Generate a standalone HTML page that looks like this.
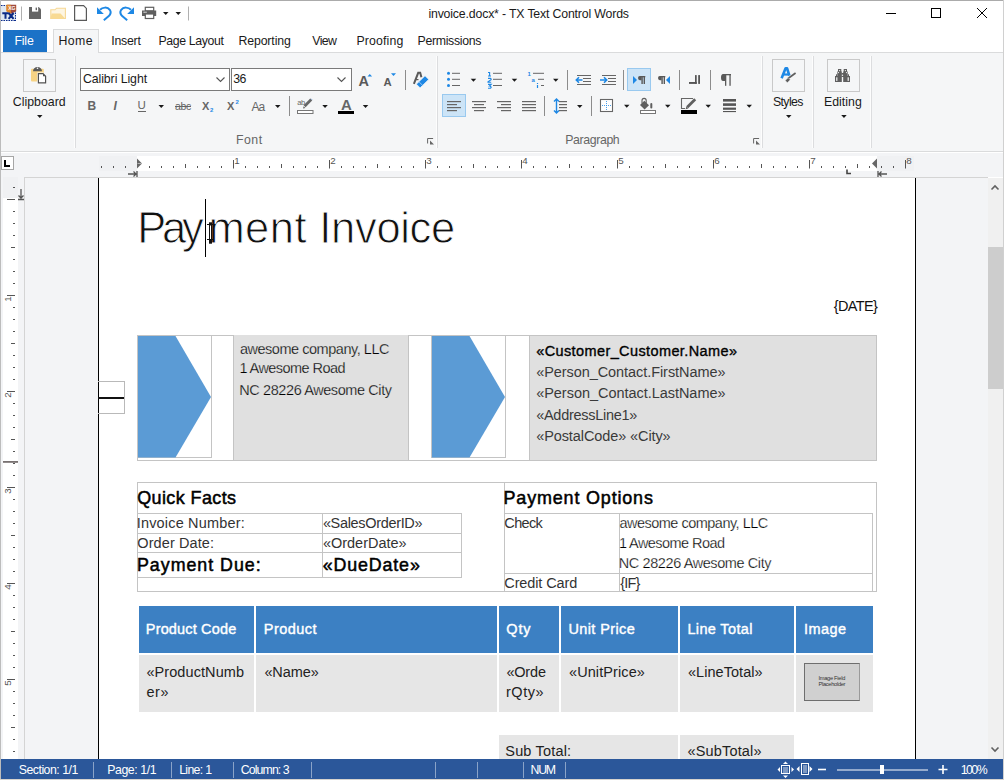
<!DOCTYPE html>
<html><head><meta charset="utf-8">
<style>
*{box-sizing:border-box;margin:0;padding:0}
html,body{width:1004px;height:780px;overflow:hidden;background:#fff;font-family:"Liberation Sans",sans-serif;color:#000}
.a{position:absolute}
.t{position:absolute;white-space:pre;line-height:1}
svg{position:absolute;overflow:visible}
</style></head><body>
<div class="a" style="left:0px;top:0px;width:1004px;height:1px;background:#ababab;"></div>
<div class="a" style="left:0px;top:0px;width:1px;height:780px;background:#bcbcbc;"></div>
<div class="a" style="left:1003px;top:0px;width:1px;height:780px;background:#d0d0d0;"></div>
<div class="t" style="left:428.40px;top:7.97px;font-size:12.32px;color:#1a1a1a;font-weight:normal;letter-spacing:-0.169px;">invoice.docx* - TX Text Control Words</div>
<svg style="left:0px;top:0px" width="1004" height="780" viewBox="0 0 1004 780"><path d="M886 13.5h10" stroke="#000" stroke-width="1"/><rect x="931.5" y="8.5" width="9" height="9" fill="none" stroke="#000" stroke-width="1"/><path d="M977 8l10 10M987 8l-10 10" stroke="#000" stroke-width="1"/></svg>
<svg style="left:0px;top:0px" width="1004" height="780" viewBox="0 0 1004 780"><rect x="1" y="5" width="15" height="16" fill="#dfe7f1"/><path d="M1 5.5h15M1 20.5h15M15.5 5v16" stroke="#0b2b8c" stroke-width="1" stroke-dasharray="1.5 1"/><path d="M7 4.8h9.2v6.4l-4.6 2.6l-4.6-2.6z" fill="#9f4a3d"/><path d="M6.2 4.8h4.6v9l-4.6-2.6z" fill="#e28b2d"/><text x="8.2" y="10.3" font-size="5.2" font-weight="bold" fill="#fff" font-family="Liberation Sans" letter-spacing="-0.2">XG</text><path d="M2.3 13.2h6.4M5.5 13.2v5.6M8.6 13l5 5.8M13.6 13l-5 5.8" stroke="#0a2a85" stroke-width="2"/><path d="M21.5 6.5v14" stroke="#b0b0b0"/><path d="M29 7h9.8l2.2 2.2V19H29z" fill="#656565"/><rect x="32" y="7" width="6.2" height="4.6" fill="#fff"/><rect x="35.6" y="7.6" width="1.4" height="2.6" fill="#656565"/><path d="M50.8 18.5V9.8h4.2l1.6-1.6h8.8v10.3z" fill="#fdf5e2" stroke="#f6d894" stroke-width="1.1"/><path d="M50.3 18.8l1.4-5.4h8.8l4.8 5.4z" fill="#f8da93"/><path d="M74.6 5.6h9l2.8 2.8v12H74.6z" fill="#fff" stroke="#595959" stroke-width="1.2"/><path d="M100 9.8C102.5 7.2 107.5 6.6 109.8 9.8C111.3 12 110.6 14.3 108.8 16.1L103.8 20.2" fill="none" stroke="#1e88e5" stroke-width="2"/><path d="M97 7.2v6.8h6.8z" fill="#1e88e5"/><path d="M131 9.8C128.5 7.2 123.5 6.6 121.2 9.8C119.7 12 120.4 14.3 122.2 16.1L127.2 20.2" fill="none" stroke="#1e88e5" stroke-width="2"/><path d="M134 7.2v6.8h-6.8z" fill="#1e88e5"/><rect x="145.3" y="7.3" width="8.4" height="3.6" fill="#fff" stroke="#5f5f5f" stroke-width="1.2"/><rect x="142" y="10.5" width="14.2" height="5.5" fill="#5f5f5f"/><rect x="145.3" y="14" width="8.4" height="4.5" fill="#fff" stroke="#5f5f5f" stroke-width="1.2"/><rect x="143.5" y="11.7" width="1.3" height="1" fill="#fff"/><rect x="145.3" y="11.7" width="1.3" height="1" fill="#fff"/><path d="M163 12h5.5l-2.75 3z" fill="#1a1a1a"/><path d="M175.5 12h5.5l-2.75 3z" fill="#1a1a1a"/><path d="M188.5 6.5v14" stroke="#b0b0b0"/></svg>
<div class="a" style="left:3px;top:30px;width:44px;height:22px;background:#1b72c7;"></div>
<div class="t" style="left:14.40px;top:34.97px;font-size:12.32px;color:#fff;font-weight:normal;letter-spacing:-0.167px;">File</div>
<div class="a" style="left:53px;top:29px;width:46px;height:24px;background:#f5f6f7;border:1px solid #dadbdc;border-bottom:none"></div>
<div class="t" style="left:58.50px;top:34.97px;font-size:12.32px;color:#1a1a1a;font-weight:normal;letter-spacing:0.433px;">Home</div>
<div class="t" style="left:111.30px;top:34.97px;font-size:12.32px;color:#1a1a1a;font-weight:normal;letter-spacing:-0.240px;">Insert</div>
<div class="t" style="left:158.40px;top:34.97px;font-size:12.32px;color:#1a1a1a;font-weight:normal;letter-spacing:-0.360px;">Page Layout</div>
<div class="t" style="left:238.40px;top:34.97px;font-size:12.32px;color:#1a1a1a;font-weight:normal;letter-spacing:-0.113px;">Reporting</div>
<div class="t" style="left:312.30px;top:34.97px;font-size:12.32px;color:#1a1a1a;font-weight:normal;letter-spacing:-0.633px;">View</div>
<div class="t" style="left:356.40px;top:34.97px;font-size:12.32px;color:#1a1a1a;font-weight:normal;letter-spacing:0.157px;">Proofing</div>
<div class="t" style="left:417.50px;top:34.97px;font-size:12.32px;color:#1a1a1a;font-weight:normal;letter-spacing:-0.320px;">Permissions</div>
<div class="a" style="left:1px;top:52px;width:1002px;height:100px;background:#f5f6f7;border-top:1px solid #dadbdc;border-bottom:1px solid #dadbdc"></div>
<div class="a" style="left:54px;top:52px;width:44px;height:1px;background:#f5f6f7;"></div>
<div class="a" style="left:74px;top:56px;width:1px;height:92px;background:#fdfdfd;"></div>
<div class="a" style="left:75px;top:56px;width:1px;height:92px;background:#dcdddf;"></div>
<div class="a" style="left:436px;top:56px;width:1px;height:92px;background:#fdfdfd;"></div>
<div class="a" style="left:437px;top:56px;width:1px;height:92px;background:#dcdddf;"></div>
<div class="a" style="left:761px;top:56px;width:1px;height:92px;background:#fdfdfd;"></div>
<div class="a" style="left:762px;top:56px;width:1px;height:92px;background:#dcdddf;"></div>
<div class="a" style="left:812px;top:56px;width:1px;height:92px;background:#fdfdfd;"></div>
<div class="a" style="left:813px;top:56px;width:1px;height:92px;background:#dcdddf;"></div>
<div class="a" style="left:870px;top:56px;width:1px;height:92px;background:#fdfdfd;"></div>
<div class="a" style="left:871px;top:56px;width:1px;height:92px;background:#dcdddf;"></div>
<div class="a" style="left:23px;top:59px;width:33px;height:33px;background:transparent;border:1px solid #c9c9c9"></div>
<svg style="left:0px;top:0px" width="1004" height="780" viewBox="0 0 1004 780"><rect x="31" y="68.8" width="12.8" height="12.8" rx="1" fill="#f7d384"/><path d="M33 71.3c0-2.4 2-4.2 4.5-4.2s4.5 1.8 4.5 4.2z" fill="#5a5a5a"/><circle cx="37.5" cy="68.3" r="0.8" fill="#fff"/><path d="M37.3 72.6h5.8l3.2 3.2v8h-9z" fill="#fff"/><path d="M38.4 73.6h4.6l2.6 2.6v6.7h-7.2z" fill="#fff" stroke="#505050" stroke-width="1.2"/><path d="M43 73.6v2.6h2.6" fill="#505050"/></svg>
<div class="t" style="left:12.80px;top:95.67px;font-size:12.32px;color:#1a1a1a;font-weight:normal;letter-spacing:0.013px;">Clipboard</div>
<svg style="left:0px;top:0px" width="1004" height="780" viewBox="0 0 1004 780"><path d="M37 115h5.5l-2.75 3z" fill="#1a1a1a"/></svg>
<div class="a" style="left:80px;top:68px;width:150px;height:23px;background:#fff;border:1px solid #7a7a7a"></div>
<div class="t" style="left:82.90px;top:72.97px;font-size:12.32px;color:#1a1a1a;font-weight:normal;letter-spacing:-0.067px;">Calibri Light</div>
<div class="a" style="left:231px;top:68px;width:121px;height:23px;background:#fff;border:1px solid #7a7a7a"></div>
<div class="t" style="left:233.30px;top:72.97px;font-size:12.32px;color:#1a1a1a;font-weight:normal;letter-spacing:-0.700px;">36</div>
<svg style="left:0px;top:0px" width="1004" height="780" viewBox="0 0 1004 780"><path d="M216.5 77.5l4 4l4-4" fill="none" stroke="#555" stroke-width="1.1"/><path d="M337.5 77.5l4 4l4-4" fill="none" stroke="#555" stroke-width="1.1"/></svg>
<div class="t" style="left:358.50px;top:73.93px;font-size:14.49px;color:#595959;font-weight:bold;letter-spacing:0.000px;transform:scaleX(1.0)">A</div>
<svg style="left:0px;top:0px" width="1004" height="780" viewBox="0 0 1004 780"><path d="M367.5 76.5l2.3-2.6l2.3 2.6z" fill="#1e88e5"/><path d="M391 73.2h5l-2.5 2.8z" fill="#1e88e5"/></svg>
<div class="t" style="left:383.60px;top:76.63px;font-size:11.3px;color:#595959;font-weight:bold;letter-spacing:0.000px;">A</div>
<div class="a" style="left:405px;top:70px;width:1px;height:20px;background:#8c8c8c;"></div>
<svg style="left:0px;top:0px" width="1004" height="780" viewBox="0 0 1004 780"><path d="M413.9 83.8L418.2 72.8h2L421.4 77.2" fill="none" stroke="#5a5a5a" stroke-width="2"/><path d="M415.3 79.6h3.2" stroke="#5a5a5a" stroke-width="1.2"/><path d="M416.3 84.2L425 75.7L428.8 79.4L420.1 87.9z" fill="#1e88e5" stroke="#f5f6f7" stroke-width="0.8"/><path d="M418.9 81.7L422.6 85.4" stroke="#9fcaf3" stroke-width="0.9"/></svg>
<div class="t" style="left:87.5px;top:99.84px;font-size:12px;color:#666;font-weight:bold;font-family:'Liberation Sans',sans-serif;">B</div>
<div class="t" style="left:113.5px;top:99.84px;font-size:12px;color:#666;font-weight:bold;font-family:'Liberation Sans',sans-serif;font-style:italic">I</div>
<div class="t" style="left:137.5px;top:99.77px;font-size:11.5px;color:#666;font-weight:normal;font-family:'Liberation Sans',sans-serif;">U</div>
<div class="a" style="left:137.5px;top:110.5px;width:8px;height:1px;background:#666;"></div>
<svg style="left:0px;top:0px" width="1004" height="780" viewBox="0 0 1004 780"><path d="M158.5 105h5.5l-2.75 3z" fill="#1a1a1a"/></svg>
<div class="t" style="left:175px;top:101.11px;font-size:10.5px;color:#666;font-weight:normal;font-family:'Liberation Sans',sans-serif;letter-spacing:-0.3px">abc</div>
<div class="a" style="left:175px;top:106px;width:16px;height:1px;background:#666;"></div>
<div class="t" style="left:202px;top:100.69px;font-size:11px;color:#666;font-weight:bold;font-family:'Liberation Sans',sans-serif;">X</div>
<div class="t" style="left:210px;top:106.92px;font-size:6px;color:#1e88e5;font-weight:bold;font-family:'Liberation Sans',sans-serif;">2</div>
<div class="t" style="left:227px;top:100.69px;font-size:11px;color:#666;font-weight:bold;font-family:'Liberation Sans',sans-serif;">X</div>
<div class="t" style="left:235.5px;top:99.42px;font-size:6px;color:#1e88e5;font-weight:bold;font-family:'Liberation Sans',sans-serif;">2</div>
<div class="t" style="left:251.5px;top:100.84px;font-size:12px;color:#666;font-weight:normal;font-family:'Liberation Sans',sans-serif;letter-spacing:-1px">Aa</div>
<svg style="left:0px;top:0px" width="1004" height="780" viewBox="0 0 1004 780"><path d="M275 105h5.5l-2.75 3z" fill="#1a1a1a"/></svg>
<div class="a" style="left:289px;top:96px;width:1px;height:20px;background:#8c8c8c;"></div>
<svg style="left:0px;top:0px" width="1004" height="780" viewBox="0 0 1004 780"><text x="297.3" y="104.8" font-size="7.6" fill="#666" font-family="Liberation Sans" letter-spacing="-0.4">ab</text><path d="M304.6 106.2L311.2 99.6" stroke="#666" stroke-width="2.8"/><path d="M303 108.6l0.6-2.4l1.8 1.8z" fill="#666"/><path d="M310.9 98.6l1.5 1.5" stroke="#5a8ed0" stroke-width="0.6"/><rect x="297.5" y="110.5" width="15.5" height="3" fill="#fff" stroke="#777" stroke-width="1"/></svg>
<svg style="left:0px;top:0px" width="1004" height="780" viewBox="0 0 1004 780"><path d="M322.3 105h5.5l-2.75 3z" fill="#1a1a1a"/></svg>
<div class="t" style="left:341.10px;top:98.06px;font-size:14.93px;color:#666;font-weight:bold;letter-spacing:0.000px;">A</div>
<div class="a" style="left:338px;top:110.5px;width:16px;height:3.5px;background:#000;"></div>
<svg style="left:0px;top:0px" width="1004" height="780" viewBox="0 0 1004 780"><path d="M362.8 105h5.5l-2.75 3z" fill="#1a1a1a"/></svg>
<div class="t" style="left:236.00px;top:133.57px;font-size:12.32px;color:#666;font-weight:normal;letter-spacing:0.500px;">Font</div>
<svg style="left:0px;top:0px" width="1004" height="780" viewBox="0 0 1004 780"><path d="M427.6 143.5v-5h5.5" fill="none" stroke="#666" stroke-width="1"/><path d="M430 140.5l4 4h-4z" fill="#666"/><path d="M753.6 143.5v-5h5.5" fill="none" stroke="#666" stroke-width="1"/><path d="M756 140.5l4 4h-4z" fill="#666"/></svg>
<svg style="left:0px;top:0px" width="1004" height="780" viewBox="0 0 1004 780"><circle cx="448.5" cy="73.3" r="1.5" fill="#1e88e5"/><path d="M452 73.3h8" stroke="#666" stroke-width="1"/><circle cx="448.5" cy="79.3" r="1.5" fill="#1e88e5"/><path d="M452 79.3h8" stroke="#666" stroke-width="1"/><circle cx="448.5" cy="85.5" r="1.5" fill="#1e88e5"/><path d="M452 85.5h8" stroke="#666" stroke-width="1"/><path d="M470.7 78.8h5.5l-2.75 3z" fill="#1a1a1a"/><path d="M493 73.3h9" stroke="#666" stroke-width="1"/><path d="M493 79.3h9" stroke="#666" stroke-width="1"/><path d="M493 85.5h9" stroke="#666" stroke-width="1"/><path d="M488 72.5h1.6v3.8M488 76h3M488 78.4h2.5l0.6 0.6v0.7l-3.1 2.2v0.4h3.2M488 84.4h3.1l-1.6 1.6h0.6l1 1v0.6l-0.6 0.6h-2.5" fill="none" stroke="#1e88e5" stroke-width="1.15"/><path d="M511.7 78.8h5.5l-2.75 3z" fill="#1a1a1a"/><text x="527.5" y="75.9" font-size="6" font-weight="bold" fill="#1e88e5" font-family="Liberation Sans">1</text><path d="M533 73.3h11" stroke="#666"/><text x="531.5" y="81.9" font-size="6" font-weight="bold" fill="#1e88e5" font-family="Liberation Sans">a</text><path d="M538 79.3h6" stroke="#666"/><path d="M537.5 83v1M537.5 85v3" stroke="#1e88e5" stroke-width="1.2"/><path d="M541 85.5h3" stroke="#666"/><path d="M553 78.8h5.5l-2.75 3z" fill="#1a1a1a"/><path d="M567.5 70v20" stroke="#8c8c8c"/><path d="M577 75.5h14M583 78.5h8M583 81.5h8M577 84.5h14" stroke="#666" stroke-width="1"/><path d="M582.5 80h-6M579 77.3l-2.7 2.7l2.7 2.7" fill="none" stroke="#1e88e5" stroke-width="1.6"/><path d="M602 75.5h14M608 78.5h8M608 81.5h8M602 84.5h14" stroke="#666" stroke-width="1"/><path d="M600 80h6.5M604 77.3l2.7 2.7l-2.7 2.7" fill="none" stroke="#1e88e5" stroke-width="1.6"/><path d="M623.5 70v20" stroke="#8c8c8c"/><rect x="627.5" y="68.5" width="23" height="22" fill="#cce4f7" stroke="#99c9ef"/><path d="M633 76v8l4-4z" fill="#1e88e5"/><path d="M641.6 76h-1.80a1.80 2.10 0 0 0 0 4.20h1.80z" fill="#595959"/><rect x="639.80" y="76" width="5.50" height="1.3" fill="#595959"/><rect x="641.40" y="76" width="1.4" height="8" fill="#595959"/><rect x="643.60" y="76" width="1.4" height="8" fill="#595959"/><path d="M661.6 76h-1.80a1.80 2.10 0 0 0 0 4.20h1.80z" fill="#595959"/><rect x="659.80" y="76" width="5.50" height="1.3" fill="#595959"/><rect x="661.40" y="76" width="1.4" height="8" fill="#595959"/><rect x="663.60" y="76" width="1.4" height="8" fill="#595959"/><path d="M670 76v8l-4-4z" fill="#1e88e5"/><path d="M679.5 70v20" stroke="#8c8c8c"/><rect x="689" y="82" width="7.7" height="1.9" fill="#555"/><rect x="695" y="75.1" width="1.7" height="8.8" fill="#555"/><rect x="698.2" y="75.1" width="1.8" height="8.8" fill="#555"/><path d="M710.5 70v20" stroke="#8c8c8c"/><path d="M725.2 74h-2.10a2.10 3.50 0 0 0 0 7.00h2.10z" fill="#595959"/><rect x="723.10" y="74" width="7.90" height="1.3" fill="#595959"/><rect x="725.00" y="74" width="1.3" height="11.8" fill="#595959"/><rect x="729.40" y="74" width="1.3" height="11.8" fill="#595959"/><rect x="442.5" y="94.5" width="23" height="22" fill="#cce4f7" stroke="#99c9ef"/><path d="M447 101.6h14" stroke="#666" stroke-width="1.2"/><path d="M447 104.6h10" stroke="#666" stroke-width="1.2"/><path d="M447 107.6h14" stroke="#666" stroke-width="1.2"/><path d="M447 110.6h10" stroke="#666" stroke-width="1.2"/><path d="M472 101.6h14" stroke="#666" stroke-width="1.2"/><path d="M474 104.6h10" stroke="#666" stroke-width="1.2"/><path d="M472 107.6h14" stroke="#666" stroke-width="1.2"/><path d="M474 110.6h10" stroke="#666" stroke-width="1.2"/><path d="M497 101.6h14" stroke="#666" stroke-width="1.2"/><path d="M501 104.6h10" stroke="#666" stroke-width="1.2"/><path d="M497 107.6h14" stroke="#666" stroke-width="1.2"/><path d="M501 110.6h10" stroke="#666" stroke-width="1.2"/><path d="M522 101.6h14" stroke="#666" stroke-width="1.2"/><path d="M522 104.6h14" stroke="#666" stroke-width="1.2"/><path d="M522 107.6h14" stroke="#666" stroke-width="1.2"/><path d="M522 110.6h14" stroke="#666" stroke-width="1.2"/><path d="M544.5 96v20" stroke="#8c8c8c"/><path d="M556.5 99.5v13M554 101.5l2.5-2.5l2.5 2.5M554 110.5l2.5 2.5l2.5-2.5" fill="none" stroke="#1e88e5" stroke-width="1.4"/><path d="M559 101.6h8" stroke="#666" stroke-width="1.2"/><path d="M559 104.6h8" stroke="#666" stroke-width="1.2"/><path d="M559 107.6h8" stroke="#666" stroke-width="1.2"/><path d="M559 110.6h8" stroke="#666" stroke-width="1.2"/><path d="M577 105h5.5l-2.75 3z" fill="#1a1a1a"/><path d="M591.5 96v20" stroke="#8c8c8c"/><rect x="600.5" y="99.5" width="12" height="12" fill="#fff" stroke="#666" stroke-width="1.1"/><path d="M606.5 101v9M602 105.5h9" stroke="#1e88e5" stroke-width="0.8" stroke-dasharray="1 1"/><path d="M624 104.8h5.5l-2.75 3z" fill="#1a1a1a"/><path d="M642 103.5v-3a2.1 2.1 0 0 1 4.2 0v3.5" fill="none" stroke="#5f5f5f" stroke-width="1.1"/><path d="M640 105L644.3 100.7L649 105.2L644.6 109.4z" fill="#5f5f5f"/><rect x="650.3" y="103" width="2" height="5.5" rx="1" fill="#5f5f5f"/><rect x="640.5" y="110.5" width="15" height="3" fill="#fff" stroke="#777"/><path d="M665 104.8h5.5l-2.75 3z" fill="#1a1a1a"/><path d="M693 98.5H681.5V108.5H685" fill="none" stroke="#666" stroke-width="1.1"/><path d="M687.2 107.3L695.2 99.3" stroke="#5f5f5f" stroke-width="2.8"/><path d="M685.6 109.2l0.8-2.6l1.9 1.9z" fill="#5f5f5f"/><rect x="681" y="110" width="16" height="4" fill="#000"/><path d="M705.5 104.8h5.5l-2.75 3z" fill="#1a1a1a"/><rect x="723" y="99" width="13" height="2.6" fill="#555"/><rect x="723" y="103.3" width="13" height="2.6" fill="#555"/><rect x="723" y="107.6" width="13" height="2.2" fill="#555"/><rect x="723" y="111" width="13" height="1.1" fill="#555"/><path d="M746.5 104.8h5.5l-2.75 3z" fill="#1a1a1a"/></svg>
<div class="t" style="left:565.30px;top:133.57px;font-size:12.32px;color:#666;font-weight:normal;letter-spacing:-0.387px;">Paragraph</div>
<div class="a" style="left:772px;top:59px;width:33px;height:33px;background:transparent;border:1px solid #c9c9c9"></div>
<div class="a" style="left:827px;top:59px;width:33px;height:33px;background:transparent;border:1px solid #c9c9c9"></div>
<svg style="left:0px;top:0px" width="1004" height="780" viewBox="0 0 1004 780"><path d="M781.6 78.2L785.6 68.3h1.5L789.3 75.5" fill="none" stroke="#1e88e5" stroke-width="2.6" stroke-linejoin="round"/><path d="M783.2 74.5h6.3" stroke="#1e88e5" stroke-width="2.2"/><path d="M788 78.5L795.6 73" stroke="#5f5f5f" stroke-width="1.7"/><path d="M785.2 80.5L788.2 77.6L790.3 79.8L787.3 82.8z" fill="#5f5f5f" stroke="#f5f6f7" stroke-width="0.5"/><g fill="#5f5f5f"><rect x="835" y="76" width="6" height="6"/><rect x="837.3" y="71.5" width="4.5" height="10.5"/><rect x="838" y="69" width="3.3" height="3"/><rect x="841.5" y="73" width="3" height="4"/><rect x="843.7" y="69" width="3.3" height="3"/><rect x="843.2" y="71.5" width="4.5" height="10.5"/><rect x="844" y="76" width="6" height="6"/><rect x="836" y="74.3" width="1" height="2"/><rect x="848" y="74.3" width="1" height="2"/></g><g fill="#f5f6f7"><rect x="836.2" y="77.3" width="1.2" height="3.6"/><rect x="847.6" y="77.3" width="1.2" height="3.6"/><circle cx="839.6" cy="70.6" r="0.6"/><circle cx="845.4" cy="70.6" r="0.6"/><circle cx="838.5" cy="72.6" r="0.6"/><circle cx="846.5" cy="72.6" r="0.6"/><circle cx="842.5" cy="75.3" r="0.7"/></g></svg>
<div class="t" style="left:772.90px;top:95.97px;font-size:12.32px;color:#1a1a1a;font-weight:normal;letter-spacing:-0.600px;">Styles</div>
<div class="t" style="left:824.00px;top:95.97px;font-size:12.32px;color:#1a1a1a;font-weight:normal;letter-spacing:0.017px;">Editing</div>
<svg style="left:0px;top:0px" width="1004" height="780" viewBox="0 0 1004 780"><path d="M786 115h5.5l-2.75 3z" fill="#1a1a1a"/><path d="M841.2 115h5.5l-2.75 3z" fill="#1a1a1a"/></svg>
<div class="a" style="left:1px;top:152px;width:1002px;height:25px;background:#f3f4f6;"></div>
<div class="a" style="left:1px;top:152px;width:1002px;height:1px;background:#ffffff;"></div>
<div class="a" style="left:99px;top:156px;width:815px;height:15px;background:#fff;"></div>
<div class="a" style="left:99px;top:156px;width:38px;height:15px;background:#f0f1f3;"></div>
<div class="a" style="left:877px;top:156px;width:37px;height:15px;background:#f0f1f3;"></div>
<div class="a" style="left:1px;top:156px;width:13px;height:14px;background:#fff;border:1px solid #a6a6a6"></div>
<svg style="left:0px;top:0px" width="1004" height="780" viewBox="0 0 1004 780"><path d="M5 160v6h5" fill="none" stroke="#000" stroke-width="2"/></svg>
<svg style="left:0px;top:0px" width="1004" height="780" viewBox="0 0 1004 780"><rect x="101" y="166" width="1" height="2" fill="#555"/><rect x="113" y="166" width="1" height="2" fill="#555"/><rect x="125" y="166" width="1" height="2" fill="#555"/><rect x="149" y="166" width="1" height="2" fill="#555"/><rect x="161" y="166" width="1" height="2" fill="#555"/><rect x="173" y="166" width="1" height="2" fill="#555"/><rect x="185" y="164" width="1" height="4" fill="#555"/><rect x="197" y="166" width="1" height="2" fill="#555"/><rect x="209" y="166" width="1" height="2" fill="#555"/><rect x="221" y="166" width="1" height="2" fill="#555"/><rect x="233" y="160" width="1" height="8.5" fill="#555"/><text x="234.2" y="163.9" font-size="9.8" fill="#555" font-family="Liberation Sans">1</text><rect x="245" y="166" width="1" height="2" fill="#555"/><rect x="257" y="166" width="1" height="2" fill="#555"/><rect x="269" y="166" width="1" height="2" fill="#555"/><rect x="281" y="164" width="1" height="4" fill="#555"/><rect x="293" y="166" width="1" height="2" fill="#555"/><rect x="305" y="166" width="1" height="2" fill="#555"/><rect x="317" y="166" width="1" height="2" fill="#555"/><rect x="329" y="160" width="1" height="8.5" fill="#555"/><text x="330.2" y="163.9" font-size="9.8" fill="#555" font-family="Liberation Sans">2</text><rect x="341" y="166" width="1" height="2" fill="#555"/><rect x="353" y="166" width="1" height="2" fill="#555"/><rect x="365" y="166" width="1" height="2" fill="#555"/><rect x="377" y="164" width="1" height="4" fill="#555"/><rect x="389" y="166" width="1" height="2" fill="#555"/><rect x="401" y="166" width="1" height="2" fill="#555"/><rect x="413" y="166" width="1" height="2" fill="#555"/><rect x="425" y="160" width="1" height="8.5" fill="#555"/><text x="426.2" y="163.9" font-size="9.8" fill="#555" font-family="Liberation Sans">3</text><rect x="437" y="166" width="1" height="2" fill="#555"/><rect x="449" y="166" width="1" height="2" fill="#555"/><rect x="461" y="166" width="1" height="2" fill="#555"/><rect x="473" y="164" width="1" height="4" fill="#555"/><rect x="485" y="166" width="1" height="2" fill="#555"/><rect x="497" y="166" width="1" height="2" fill="#555"/><rect x="509" y="166" width="1" height="2" fill="#555"/><rect x="521" y="160" width="1" height="8.5" fill="#555"/><text x="522.2" y="163.9" font-size="9.8" fill="#555" font-family="Liberation Sans">4</text><rect x="533" y="166" width="1" height="2" fill="#555"/><rect x="545" y="166" width="1" height="2" fill="#555"/><rect x="557" y="166" width="1" height="2" fill="#555"/><rect x="569" y="164" width="1" height="4" fill="#555"/><rect x="581" y="166" width="1" height="2" fill="#555"/><rect x="593" y="166" width="1" height="2" fill="#555"/><rect x="605" y="166" width="1" height="2" fill="#555"/><rect x="617" y="160" width="1" height="8.5" fill="#555"/><text x="618.2" y="163.9" font-size="9.8" fill="#555" font-family="Liberation Sans">5</text><rect x="629" y="166" width="1" height="2" fill="#555"/><rect x="641" y="166" width="1" height="2" fill="#555"/><rect x="653" y="166" width="1" height="2" fill="#555"/><rect x="665" y="164" width="1" height="4" fill="#555"/><rect x="677" y="166" width="1" height="2" fill="#555"/><rect x="689" y="166" width="1" height="2" fill="#555"/><rect x="701" y="166" width="1" height="2" fill="#555"/><rect x="713" y="160" width="1" height="8.5" fill="#555"/><text x="714.2" y="163.9" font-size="9.8" fill="#555" font-family="Liberation Sans">6</text><rect x="725" y="166" width="1" height="2" fill="#555"/><rect x="737" y="166" width="1" height="2" fill="#555"/><rect x="749" y="166" width="1" height="2" fill="#555"/><rect x="761" y="164" width="1" height="4" fill="#555"/><rect x="773" y="166" width="1" height="2" fill="#555"/><rect x="785" y="166" width="1" height="2" fill="#555"/><rect x="797" y="166" width="1" height="2" fill="#555"/><rect x="809" y="160" width="1" height="8.5" fill="#555"/><text x="810.2" y="163.9" font-size="9.8" fill="#555" font-family="Liberation Sans">7</text><rect x="821" y="166" width="1" height="2" fill="#555"/><rect x="833" y="166" width="1" height="2" fill="#555"/><rect x="845" y="166" width="1" height="2" fill="#555"/><rect x="857" y="164" width="1" height="4" fill="#555"/><rect x="869" y="166" width="1" height="2" fill="#555"/><rect x="881" y="166" width="1" height="2" fill="#555"/><rect x="893" y="166" width="1" height="2" fill="#555"/><rect x="905" y="160" width="1" height="8.5" fill="#555"/><text x="906.2" y="163.9" font-size="9.8" fill="#555" font-family="Liberation Sans">8</text><path d="M137 158.5v10l5-5z" fill="#666"/><path d="M137.5 163.5h4" stroke="#fff" stroke-width="0.5"/><path d="M128 174h8M133.5 171.5l2.5 2.5l-2.5 2.5M137 171v6" fill="none" stroke="#555" stroke-width="1.3"/><path d="M877 158.5v10l-5-5z" fill="#666"/><path d="M887 174h-8M881.5 171.5l-2.5 2.5l2.5 2.5M878 171v6" fill="none" stroke="#555" stroke-width="1.3"/><path d="M847 169.5v4h4" fill="none" stroke="#444" stroke-width="1.6"/></svg>
<div class="a" style="left:1px;top:177px;width:987px;height:582px;background:#f3f4f6;"></div>
<div class="a" style="left:24px;top:177px;width:964px;height:1px;background:#d4d4d4;"></div>
<div class="a" style="left:24px;top:177px;width:1px;height:582px;background:#d4d4d4;"></div>
<div class="a" style="left:3px;top:177px;width:15px;height:582px;background:#fff;"></div>
<div class="a" style="left:3px;top:177px;width:15px;height:21px;background:#f0f1f3;"></div>
<svg style="left:0px;top:0px" width="1004" height="780" viewBox="0 0 1004 780"><rect x="13" y="187" width="2" height="1" fill="#555"/><rect x="7" y="199" width="8" height="1" fill="#555"/><rect x="13" y="211" width="2" height="1" fill="#555"/><rect x="13" y="223" width="2" height="1" fill="#555"/><rect x="13" y="235" width="2" height="1" fill="#555"/><rect x="11" y="247" width="4" height="1" fill="#555"/><rect x="13" y="259" width="2" height="1" fill="#555"/><rect x="13" y="271" width="2" height="1" fill="#555"/><rect x="13" y="283" width="2" height="1" fill="#555"/><rect x="7" y="295" width="8" height="1" fill="#555"/><text transform="translate(11 301.8) rotate(-90)" font-size="9.8" fill="#555" font-family="Liberation Sans">1</text><rect x="13" y="307" width="2" height="1" fill="#555"/><rect x="13" y="319" width="2" height="1" fill="#555"/><rect x="13" y="331" width="2" height="1" fill="#555"/><rect x="11" y="343" width="4" height="1" fill="#555"/><rect x="13" y="355" width="2" height="1" fill="#555"/><rect x="13" y="367" width="2" height="1" fill="#555"/><rect x="13" y="379" width="2" height="1" fill="#555"/><rect x="7" y="391" width="8" height="1" fill="#555"/><text transform="translate(11 397.8) rotate(-90)" font-size="9.8" fill="#555" font-family="Liberation Sans">2</text><rect x="13" y="403" width="2" height="1" fill="#555"/><rect x="13" y="415" width="2" height="1" fill="#555"/><rect x="13" y="427" width="2" height="1" fill="#555"/><rect x="11" y="439" width="4" height="1" fill="#555"/><rect x="13" y="451" width="2" height="1" fill="#555"/><rect x="13" y="463" width="2" height="1" fill="#555"/><rect x="13" y="475" width="2" height="1" fill="#555"/><rect x="7" y="487" width="8" height="1" fill="#555"/><text transform="translate(11 493.8) rotate(-90)" font-size="9.8" fill="#555" font-family="Liberation Sans">3</text><rect x="13" y="499" width="2" height="1" fill="#555"/><rect x="13" y="511" width="2" height="1" fill="#555"/><rect x="13" y="523" width="2" height="1" fill="#555"/><rect x="11" y="535" width="4" height="1" fill="#555"/><rect x="13" y="547" width="2" height="1" fill="#555"/><rect x="13" y="559" width="2" height="1" fill="#555"/><rect x="13" y="571" width="2" height="1" fill="#555"/><rect x="7" y="583" width="8" height="1" fill="#555"/><text transform="translate(11 589.8) rotate(-90)" font-size="9.8" fill="#555" font-family="Liberation Sans">4</text><rect x="13" y="595" width="2" height="1" fill="#555"/><rect x="13" y="607" width="2" height="1" fill="#555"/><rect x="13" y="619" width="2" height="1" fill="#555"/><rect x="11" y="631" width="4" height="1" fill="#555"/><rect x="13" y="643" width="2" height="1" fill="#555"/><rect x="13" y="655" width="2" height="1" fill="#555"/><rect x="13" y="667" width="2" height="1" fill="#555"/><rect x="7" y="679" width="8" height="1" fill="#555"/><text transform="translate(11 685.8) rotate(-90)" font-size="9.8" fill="#555" font-family="Liberation Sans">5</text><rect x="13" y="691" width="2" height="1" fill="#555"/><rect x="13" y="703" width="2" height="1" fill="#555"/><rect x="13" y="715" width="2" height="1" fill="#555"/><rect x="11" y="727" width="4" height="1" fill="#555"/><rect x="13" y="739" width="2" height="1" fill="#555"/><rect x="13" y="751" width="2" height="1" fill="#555"/><path d="M21 189v9M18.5 195.5l2.5 2.5l2.5-2.5M18 199.5h6" fill="none" stroke="#555" stroke-width="1.3"/><rect x="3" y="461" width="15" height="1.8" fill="#787171"/></svg>
<div class="a" style="left:98px;top:178px;width:818px;height:581px;background:#fff;border-left:1px solid #000;border-right:1px solid #000"></div>
<div class="a" style="left:988px;top:178px;width:15px;height:581px;background:#f0f0f0;"></div>
<div class="a" style="left:988px;top:247px;width:15px;height:142px;background:#cdcdcd;"></div>
<svg style="left:0px;top:0px" width="1004" height="780" viewBox="0 0 1004 780"><path d="M991.5 189.5l3.5-3.5l3.5 3.5" fill="none" stroke="#606060" stroke-width="1.6"/><path d="M991.5 747.5l3.5 3.5l3.5-3.5" fill="none" stroke="#606060" stroke-width="1.6"/></svg>
<div class="t" style="left:137.30px;top:207.39px;font-size:43.48px;color:#111;font-weight:normal;letter-spacing:-4.250px;-webkit-text-stroke:0.9px #fff">Pay</div>
<div class="t" style="left:208.40px;top:207.39px;font-size:43.48px;color:#111;font-weight:normal;letter-spacing:0.500px;-webkit-text-stroke:0.9px #fff">ment</div>
<div class="t" style="left:319.30px;top:207.39px;font-size:43.48px;color:#111;font-weight:normal;letter-spacing:-0.300px;-webkit-text-stroke:0.9px #fff">Invoice</div>
<div class="a" style="left:205px;top:199px;width:1px;height:58px;background:#000;"></div>
<svg style="left:0px;top:0px" width="1004" height="780" viewBox="0 0 1004 780"><rect x="209" y="222.3" width="3" height="21.4" fill="#111"/><rect x="210" y="225.5" width="1" height="13.5" fill="#fff"/><rect x="207" y="224" width="7" height="1" fill="#111"/><rect x="207" y="239" width="7" height="1" fill="#111"/></svg>
<div class="t" style="left:833.70px;top:298.83px;font-size:14.49px;color:#111;font-weight:normal;letter-spacing:-0.600px;">{DATE}</div>
<div class="a" style="left:98px;top:381px;width:27px;height:33px;background:transparent;border:1px solid #b9b9b9;border-left:none"></div>
<div class="a" style="left:98px;top:397px;width:26px;height:2px;background:#111;"></div>
<div class="a" style="left:137px;top:335px;width:740px;height:126px;background:#fff;border:1px solid #c4c4c4"></div>
<div class="a" style="left:233px;top:335px;width:176px;height:125px;background:#e0e0e0;border-left:1px solid #c4c4c4;border-right:1px solid #c4c4c4"></div>
<div class="a" style="left:529px;top:335px;width:348px;height:125px;background:#e0e0e0;border-left:1px solid #c4c4c4;border-right:1px solid #c4c4c4;border-top:1px solid #c4c4c4"></div>
<div class="a" style="left:137px;top:335px;width:75px;height:123px;background:#fff;border:1px solid #c4c4c4"></div>
<div class="a" style="left:431px;top:335px;width:75px;height:123px;background:#fff;border:1px solid #c4c4c4"></div>
<svg style="left:0px;top:0px" width="1004" height="780" viewBox="0 0 1004 780"><path d="M138 336h37.5l35.5 61l-35.5 60.5H138z" fill="#5b9bd5"/><path d="M432 336h37.5l35.5 61l-35.5 60.5H432z" fill="#5b9bd5"/></svg>
<div class="t" style="left:239.90px;top:341.73px;font-size:14.49px;color:#000;font-weight:normal;letter-spacing:-0.458px;-webkit-text-stroke:0.25px #e0e0e0">awesome company, LLC</div>
<div class="t" style="left:239.40px;top:360.63px;font-size:14.49px;color:#000;font-weight:normal;letter-spacing:-0.554px;-webkit-text-stroke:0.25px #e0e0e0">1 Awesome Road</div>
<div class="t" style="left:239.30px;top:382.53px;font-size:14.49px;color:#000;font-weight:normal;letter-spacing:-0.400px;-webkit-text-stroke:0.25px #e0e0e0">NC 28226 Awesome City</div>
<div class="t" style="left:536.20px;top:343.93px;font-size:14.49px;color:#000;font-weight:normal;letter-spacing:0.400px;-webkit-text-stroke:0.35px #000">&laquo;Customer_Customer.Name&raquo;</div>
<div class="t" style="left:536.20px;top:365.43px;font-size:14.49px;color:#3a3a3a;font-weight:normal;letter-spacing:-0.060px;">&laquo;Person_Contact.FirstName&raquo;</div>
<div class="t" style="left:536.20px;top:386.23px;font-size:14.49px;color:#3a3a3a;font-weight:normal;letter-spacing:-0.029px;">&laquo;Person_Contact.LastName&raquo;</div>
<div class="t" style="left:536.20px;top:407.73px;font-size:14.49px;color:#3a3a3a;font-weight:normal;letter-spacing:-0.269px;">&laquo;AddressLine1&raquo;</div>
<div class="t" style="left:536.20px;top:429.33px;font-size:14.49px;color:#3a3a3a;font-weight:normal;letter-spacing:-0.089px;">&laquo;PostalCode&raquo; &laquo;City&raquo;</div>
<div class="a" style="left:137px;top:482px;width:740px;height:110px;background:#fff;border:1px solid #c4c4c4"></div>
<div class="a" style="left:504px;top:482px;width:1px;height:109px;background:#c4c4c4;"></div>
<div class="t" style="left:137.20px;top:490.09px;font-size:17.97px;color:#000;font-weight:normal;letter-spacing:0.410px;-webkit-text-stroke:0.5px #000">Quick Facts</div>
<div class="t" style="left:503.50px;top:490.19px;font-size:17.97px;color:#000;font-weight:normal;letter-spacing:0.836px;-webkit-text-stroke:0.5px #000">Payment Options</div>
<div class="a" style="left:137px;top:513px;width:325px;height:65px;background:transparent;border:1px solid #c4c4c4;border-left:none"></div>
<div class="a" style="left:137px;top:533px;width:325px;height:1px;background:#c4c4c4;"></div>
<div class="a" style="left:137px;top:552px;width:325px;height:1px;background:#c4c4c4;"></div>
<div class="a" style="left:322px;top:513px;width:1px;height:65px;background:#c4c4c4;"></div>
<div class="t" style="left:136.70px;top:515.93px;font-size:14.49px;color:#333;font-weight:normal;letter-spacing:0.186px;">Invoice Number:</div>
<div class="t" style="left:137.30px;top:535.93px;font-size:14.49px;color:#333;font-weight:normal;letter-spacing:0.100px;">Order Date:</div>
<div class="t" style="left:137.00px;top:557.31px;font-size:17.83px;color:#000;font-weight:normal;letter-spacing:0.973px;-webkit-text-stroke:0.5px #000">Payment Due:</div>
<div class="t" style="left:322.90px;top:515.93px;font-size:14.49px;color:#333;font-weight:normal;letter-spacing:-0.323px;">&laquo;SalesOrderID&raquo;</div>
<div class="t" style="left:322.90px;top:535.93px;font-size:14.49px;color:#333;font-weight:normal;letter-spacing:0.000px;">&laquo;OrderDate&raquo;</div>
<div class="t" style="left:322.80px;top:557.31px;font-size:17.83px;color:#000;font-weight:normal;letter-spacing:0.850px;-webkit-text-stroke:0.5px #000">&laquo;DueDate&raquo;</div>
<div class="a" style="left:504px;top:513px;width:369px;height:78px;background:transparent;border:1px solid #c4c4c4;border-bottom:none"></div>
<div class="a" style="left:504px;top:573px;width:369px;height:1px;background:#c4c4c4;"></div>
<div class="a" style="left:619px;top:513px;width:1px;height:78px;background:#c4c4c4;"></div>
<div class="t" style="left:504.30px;top:515.93px;font-size:14.49px;color:#333;font-weight:normal;letter-spacing:-0.625px;">Check</div>
<div class="t" style="left:619.40px;top:515.93px;font-size:14.49px;color:#000;font-weight:normal;letter-spacing:-0.500px;-webkit-text-stroke:0.25px #fff">awesome company, LLC</div>
<div class="t" style="left:618.90px;top:535.83px;font-size:14.49px;color:#000;font-weight:normal;letter-spacing:-0.554px;-webkit-text-stroke:0.25px #fff">1 Awesome Road</div>
<div class="t" style="left:618.80px;top:555.73px;font-size:14.49px;color:#000;font-weight:normal;letter-spacing:-0.400px;-webkit-text-stroke:0.25px #fff">NC 28226 Awesome City</div>
<div class="t" style="left:504.30px;top:575.63px;font-size:14.49px;color:#333;font-weight:normal;letter-spacing:-0.110px;">Credit Card</div>
<div class="t" style="left:620.30px;top:575.63px;font-size:14.49px;color:#333;font-weight:normal;letter-spacing:-0.867px;">{IF}</div>
<div class="a" style="left:139px;top:606px;width:115px;height:47px;background:#3c80c3;"></div>
<div class="a" style="left:139px;top:655px;width:115px;height:57px;background:#e6e6e6;"></div>
<div class="a" style="left:256px;top:606px;width:241px;height:47px;background:#3c80c3;"></div>
<div class="a" style="left:256px;top:655px;width:241px;height:57px;background:#e6e6e6;"></div>
<div class="a" style="left:499px;top:606px;width:60px;height:47px;background:#3c80c3;"></div>
<div class="a" style="left:499px;top:655px;width:60px;height:57px;background:#e6e6e6;"></div>
<div class="a" style="left:561px;top:606px;width:117px;height:47px;background:#3c80c3;"></div>
<div class="a" style="left:561px;top:655px;width:117px;height:57px;background:#e6e6e6;"></div>
<div class="a" style="left:680px;top:606px;width:114px;height:47px;background:#3c80c3;"></div>
<div class="a" style="left:680px;top:655px;width:114px;height:57px;background:#e6e6e6;"></div>
<div class="a" style="left:796px;top:606px;width:77px;height:47px;background:#3c80c3;"></div>
<div class="a" style="left:796px;top:655px;width:77px;height:57px;background:#e6e6e6;"></div>
<div class="t" style="left:145.80px;top:622.03px;font-size:14.49px;color:#fff;font-weight:normal;letter-spacing:0.173px;-webkit-text-stroke:0.4px #fff">Product Code</div>
<div class="t" style="left:263.80px;top:622.03px;font-size:14.49px;color:#fff;font-weight:normal;letter-spacing:0.450px;-webkit-text-stroke:0.4px #fff">Product</div>
<div class="t" style="left:506.30px;top:622.03px;font-size:14.49px;color:#fff;font-weight:normal;letter-spacing:0.850px;-webkit-text-stroke:0.4px #fff">Qty</div>
<div class="t" style="left:568.50px;top:622.03px;font-size:14.49px;color:#fff;font-weight:normal;letter-spacing:0.378px;-webkit-text-stroke:0.4px #fff">Unit Price</div>
<div class="t" style="left:687.40px;top:622.03px;font-size:14.49px;color:#fff;font-weight:normal;letter-spacing:0.367px;-webkit-text-stroke:0.4px #fff">Line Total</div>
<div class="t" style="left:804.10px;top:622.03px;font-size:14.49px;color:#fff;font-weight:normal;letter-spacing:0.400px;-webkit-text-stroke:0.4px #fff">Image</div>
<div class="t" style="left:146.40px;top:664.83px;font-size:14.49px;color:#222;font-weight:normal;letter-spacing:0.091px;">&laquo;ProductNumb</div>
<div class="t" style="left:146.40px;top:684.73px;font-size:14.49px;color:#222;font-weight:normal;letter-spacing:0.600px;">er&raquo;</div>
<div class="t" style="left:264.40px;top:664.83px;font-size:14.49px;color:#222;font-weight:normal;letter-spacing:-0.080px;">&laquo;Name&raquo;</div>
<div class="t" style="left:506.40px;top:664.83px;font-size:14.49px;color:#222;font-weight:normal;letter-spacing:-0.175px;">&laquo;Orde</div>
<div class="t" style="left:506.00px;top:684.73px;font-size:14.49px;color:#222;font-weight:normal;letter-spacing:0.525px;">rQty&raquo;</div>
<div class="t" style="left:569.00px;top:664.83px;font-size:14.49px;color:#222;font-weight:normal;letter-spacing:0.100px;">&laquo;UnitPrice&raquo;</div>
<div class="t" style="left:688.00px;top:664.83px;font-size:14.49px;color:#222;font-weight:normal;letter-spacing:0.050px;">&laquo;LineTotal&raquo;</div>
<div class="a" style="left:804px;top:663px;width:56px;height:38px;background:#d0d0d0;border:1px solid #6e6e6e;border-right-color:#9a9a9a"></div>
<div class="t" style="left:818.50px;top:675.62px;font-size:5.65px;color:#333;font-weight:normal;letter-spacing:-0.270px;">Image Field</div>
<div class="t" style="left:818.50px;top:682.42px;font-size:5.65px;color:#333;font-weight:normal;letter-spacing:-0.280px;">Placeholder</div>
<div class="a" style="left:499px;top:735px;width:179px;height:24px;background:#e6e6e6;"></div>
<div class="a" style="left:680px;top:735px;width:114px;height:24px;background:#e6e6e6;"></div>
<div class="t" style="left:505.30px;top:743.83px;font-size:14.49px;color:#222;font-weight:normal;letter-spacing:0.178px;">Sub Total:</div>
<div class="t" style="left:687.60px;top:743.83px;font-size:14.49px;color:#222;font-weight:normal;letter-spacing:0.156px;">&laquo;SubTotal&raquo;</div>
<div class="a" style="left:1px;top:759px;width:1002px;height:20px;background:#2b579a;"></div>
<div class="a" style="left:0px;top:779px;width:1004px;height:1px;background:#d6d3ce;"></div>
<div class="t" style="left:18.80px;top:763.97px;font-size:12.32px;color:#fff;font-weight:normal;letter-spacing:-0.509px;">Section: 1/1</div>
<div class="t" style="left:107.20px;top:763.97px;font-size:12.32px;color:#fff;font-weight:normal;letter-spacing:-0.425px;">Page: 1/1</div>
<div class="t" style="left:179.20px;top:763.97px;font-size:12.32px;color:#fff;font-weight:normal;letter-spacing:-0.683px;">Line: 1</div>
<div class="t" style="left:240.80px;top:763.97px;font-size:12.32px;color:#fff;font-weight:normal;letter-spacing:-0.900px;">Column: 3</div>
<div class="t" style="left:530.50px;top:763.97px;font-size:12.32px;color:#fff;font-weight:normal;letter-spacing:-1.250px;">NUM</div>
<div class="t" style="left:960.80px;top:763.97px;font-size:12.32px;color:#fff;font-weight:normal;letter-spacing:-1.567px;">100%</div>
<div class="a" style="left:93px;top:762px;width:1px;height:16px;background:#8aa3c8;"></div>
<div class="a" style="left:171px;top:762px;width:1px;height:16px;background:#8aa3c8;"></div>
<div class="a" style="left:233px;top:762px;width:1px;height:16px;background:#8aa3c8;"></div>
<div class="a" style="left:311px;top:762px;width:1px;height:16px;background:#8aa3c8;"></div>
<div class="a" style="left:435px;top:762px;width:1px;height:16px;background:#8aa3c8;"></div>
<div class="a" style="left:477px;top:762px;width:1px;height:16px;background:#8aa3c8;"></div>
<div class="a" style="left:523px;top:762px;width:1px;height:16px;background:#8aa3c8;"></div>
<div class="a" style="left:565px;top:762px;width:1px;height:16px;background:#8aa3c8;"></div>
<svg style="left:0px;top:0px" width="1004" height="780" viewBox="0 0 1004 780"><rect x="781.5" y="765.5" width="8" height="8" fill="none" stroke="#fff" stroke-width="1"/><path d="M783 768h5M783 770h5M783 772h5" stroke="#fff" stroke-width="0.8"/><path d="M777.5 769.5l2.5-2.5v5zM794 769.5l-2.5-2.5v5zM785.5 761.5l2.5 2.5h-5zM785.5 778l2.5-2.5h-5z" fill="#fff"/><rect x="801.5" y="763.5" width="7" height="11" fill="none" stroke="#fff" stroke-width="1"/><path d="M803 766h4M803 768h4M803 770h4M803 772h4" stroke="#fff" stroke-width="0.8"/><path d="M796.5 769l3-3v6zM812.5 769l-3-3v6z" fill="#fff"/><path d="M818 769.5h8" stroke="#fff" stroke-width="1.6"/><path d="M837 770h91" stroke="#fff" stroke-width="1"/><rect x="880" y="765" width="4" height="9" fill="#fff"/><path d="M938.5 769.5h9M943 765v9" stroke="#fff" stroke-width="1.6"/></svg>
</body></html>
